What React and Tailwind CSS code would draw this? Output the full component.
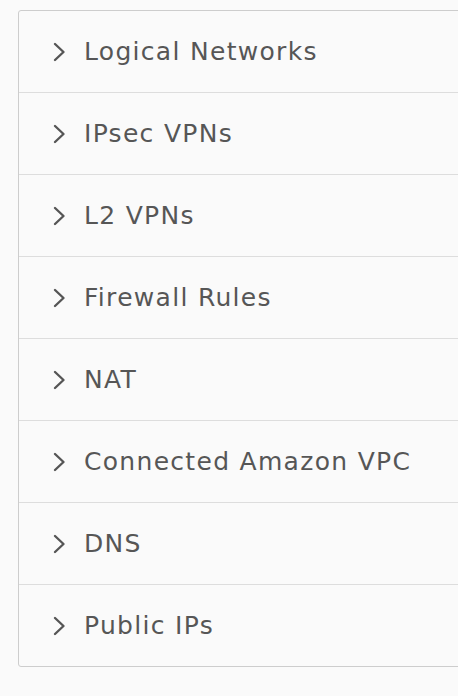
const items = [
  "Logical Networks",
  "IPsec VPNs",
  "L2 VPNs",
  "Firewall Rules",
  "NAT",
  "Connected Amazon VPC",
  "DNS",
  "Public IPs",
];

const Chevron = () => (
  <svg width="13" height="20" viewBox="0 0 13 20" className="shrink-0">
    <polyline
      points="2,2 10.5,10 2,18"
      fill="none"
      stroke="#555"
      strokeWidth="2.4"
      strokeLinecap="round"
      strokeLinejoin="round"
    />
  </svg>
);

export default function App() {
  return (
    <div className="w-[458px] h-[696px] overflow-hidden bg-[#fafafa] pt-[10px] pl-[18px]">
      <div className="w-[480px] border border-[#cdcdcd] rounded-[3px] bg-[#fafafa]">
        {items.map((label, i) => (
          <div
            key={label}
            className={`flex items-center pl-[34px] ${
              i < items.length - 1 ? "h-[82px] border-b border-[#dddddd]" : "h-[81px]"
            }`}
          >
            <Chevron />
            <span
              className="ml-[18px] text-[25px] text-[#565656] tracking-[1.3px]"
              style={{ fontFamily: "'DejaVu Sans', Lato, sans-serif" }}
            >
              {label}
            </span>
          </div>
        ))}
      </div>
    </div>
  );
}
